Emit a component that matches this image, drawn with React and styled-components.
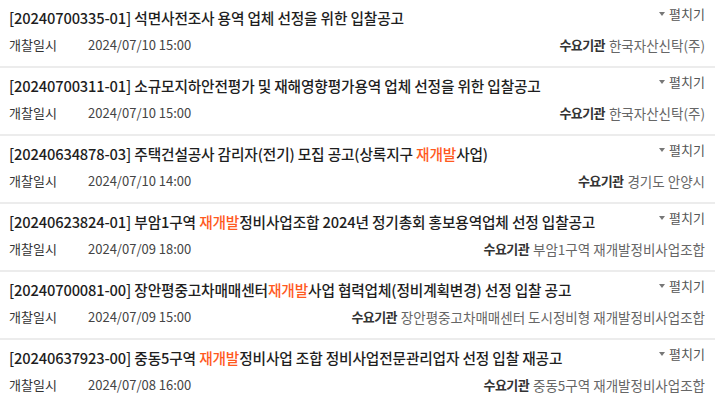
import React from "react";
import styled, { createGlobalStyle } from "styled-components";

const GlobalStyle = createGlobalStyle`
  html, body {
    margin: 0;
    padding: 0;
    background: #fff;
  }
  body {
    font-family: "Noto Sans CJK KR", "Noto Sans", sans-serif;
    color: #222;
  }
`;

const items = [
  {
    title: "[20240700335-01] 석면사전조사 용역 업체 선정을 위한 입찰공고",
    date: "2024/07/10 15:00",
    org: "한국자산신탁(주)",
  },
  {
    title: "[20240700311-01] 소규모지하안전평가 및 재해영향평가용역 업체 선정을 위한 입찰공고",
    date: "2024/07/10 15:00",
    org: "한국자산신탁(주)",
  },
  {
    title: "[20240634878-03] 주택건설공사 감리자(전기) 모집 공고(상록지구 재개발사업)",
    date: "2024/07/10 14:00",
    org: "경기도 안양시",
  },
  {
    title: "[20240623824-01] 부암1구역 재개발정비사업조합 2024년 정기총회 홍보용역업체 선정 입찰공고",
    date: "2024/07/09 18:00",
    org: "부암1구역 재개발정비사업조합",
  },
  {
    title: "[20240700081-00] 장안평중고차매매센터재개발사업 협력업체(정비계획변경) 선정 입찰 공고",
    date: "2024/07/09 15:00",
    org: "장안평중고차매매센터 도시정비형 재개발정비사업조합",
  },
  {
    title: "[20240637923-00] 중동5구역 재개발정비사업 조합 정비사업전문관리업자 선정 입찰 재공고",
    date: "2024/07/08 16:00",
    org: "중동5구역 재개발정비사업조합",
  },
];

const KEYWORD = "재개발";

function highlight(text) {
  const parts = text.split(KEYWORD);
  return parts.map((p, i) => (
    <React.Fragment key={i}>
      {p}
      {i < parts.length - 1 && <Mark>{KEYWORD}</Mark>}
    </React.Fragment>
  ));
}

export default function App() {
  return (
    <>
      <GlobalStyle />
      <List>
        {items.map((it, i) => (
          <Row key={i}>
            <TopLine>
              <Title>{highlight(it.title)}</Title>
              <Toggle>
                <Caret />
                펼치기
              </Toggle>
            </TopLine>
            <BottomLine>
              <Meta>
                <Label>개찰일시</Label>
                <DateText>{it.date}</DateText>
              </Meta>
              <Org>
                <OrgLabel>수요기관</OrgLabel>
                <OrgName>{it.org}</OrgName>
              </Org>
            </BottomLine>
          </Row>
        ))}
      </List>
    </>
  );
}

const List = styled.ul`
  list-style: none;
  margin: 0;
  padding: 0;
  width: 715px;
`;

const Row = styled.li`
  box-sizing: border-box;
  height: 68px;
  padding: 6px 10px 0 9px;
  border-bottom: 2px solid #ececec;
`;

const TopLine = styled.div`
  display: flex;
  justify-content: space-between;
  align-items: flex-start;
`;

const Title = styled.div`
  font-size: 14.7px;
  font-weight: 500;
  line-height: 24px;
  color: #1e1e1e;
  letter-spacing: -0.15px;
  white-space: nowrap;
`;

const Mark = styled.span`
  color: #ff5a1f;
`;

const Toggle = styled.span`
  display: flex;
  align-items: center;
  gap: 4px;
  font-size: 13px;
  line-height: 16px;
  color: #555;
  white-space: nowrap;
`;

const Caret = styled.i`
  display: inline-block;
  width: 0;
  height: 0;
  border-left: 3.5px solid transparent;
  border-right: 3.5px solid transparent;
  border-top: 4px solid #777;
`;

const BottomLine = styled.div`
  display: flex;
  justify-content: space-between;
  align-items: center;
  margin-top: 6px;
  font-size: 13px;
  line-height: 18px;
`;

const Meta = styled.div`
  display: flex;
  align-items: center;
`;

const Label = styled.span`
  width: 79px;
  color: #333;
`;

const DateText = styled.span`
  color: #444;
`;

const Org = styled.div`
  display: flex;
  align-items: center;
  gap: 4px;
  white-space: nowrap;
`;

const OrgLabel = styled.span`
  font-weight: 700;
  color: #333;
  letter-spacing: -0.6px;
`;

const OrgName = styled.span`
  color: #666;
  font-size: 13.5px;
`;
